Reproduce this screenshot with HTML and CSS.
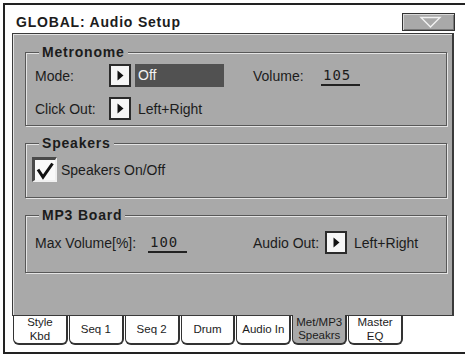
FILE: index.html
```html
<!DOCTYPE html>
<html lang="en">
<head>
  <meta charset="UTF-8" />
  <title>GLOBAL: Audio Setup</title>
  <link rel="stylesheet" href="styles.css">
</head>
<body>
  <div class="screen">
    <div class="titlebar">
      <h1 class="title">GLOBAL: Audio Setup</h1>
      <button class="menu-btn">
        <svg width="51" height="16" viewBox="0 0 51 16">
          <polygon points="18,3.5 37,3.5 27.5,13" fill="none" stroke="#f2f2f2" stroke-width="1.4"/>
        </svg>
      </button>
    </div>

    <div class="panel">
      <div class="group">
        <div class="group-title">Metronome</div>
        <div class="row first">
          <div class="cell">
            <span class="label">Mode:</span>
            <span class="arrow-box"><svg width="7" height="11" viewBox="0 0 7 11"><path d="M0.5 0.5 L6.5 5.5 L0.5 10.5 Z" fill="#111"/></svg></span>
            <span class="select-field">Off</span>
          </div>
          <div class="cell">
            <span class="label label-vol">Volume:</span>
            <span class="num">105</span>
          </div>
        </div>
        <div class="row second">
          <div class="cell">
            <span class="label">Click Out:</span>
            <span class="arrow-box"><svg width="7" height="11" viewBox="0 0 7 11"><path d="M0.5 0.5 L6.5 5.5 L0.5 10.5 Z" fill="#111"/></svg></span>
            <span class="value">Left+Right</span>
          </div>
        </div>
      </div>

      <div class="group">
        <div class="group-title">Speakers</div>
        <div class="check-row">
          <span class="checkbox">
            <svg width="20" height="20" viewBox="0 0 20 20"><path d="M3 9.5 L8 17 L17.5 3.5" fill="none" stroke="#111" stroke-width="3"/></svg>
          </span>
          <span class="value">Speakers On/Off</span>
        </div>
      </div>

      <div class="group group-mp3">
        <div class="group-title">MP3 Board</div>
        <div class="row first mp3-row">
          <div class="cell">
            <span class="label label-max">Max Volume[%]:</span>
            <span class="num">100</span>
          </div>
          <div class="cell">
            <span class="label label-out">Audio Out:</span>
            <span class="arrow-box"><svg width="7" height="11" viewBox="0 0 7 11"><path d="M0.5 0.5 L6.5 5.5 L0.5 10.5 Z" fill="#111"/></svg></span>
            <span class="value">Left+Right</span>
          </div>
        </div>
      </div>
    </div>

    <div class="tabs">
      <div class="tab">Style<br>Kbd</div>
      <div class="tab">Seq 1</div>
      <div class="tab">Seq 2</div>
      <div class="tab">Drum</div>
      <div class="tab">Audio In</div>
      <div class="tab active">Met/MP3<br>Speakrs</div>
      <div class="tab">Master<br>EQ</div>
    </div>
  </div>
</body>
</html>
```

FILE: styles.css
```css
* {
  margin: 0;
  padding: 0;
  box-sizing: border-box;
}

:root {
  --panel: #a9a9a9;
  --line: #3a3a3a;
  --light: #e4e4e4;
  --ink: #1c1c1c;
}

body {
  background: #fff;
  font-family: "Liberation Sans", Arial, sans-serif;
  font-size: 14px;
  color: var(--ink);
  padding: 3px 0 0 3px;
}

.screen {
  width: 462px;
  height: 351px;
  border: 2px solid #222;
  border-right: none;
  display: flex;
  flex-direction: column;
}

.titlebar {
  height: 28px;
  display: flex;
  justify-content: space-between;
  align-items: flex-start;
}

.title {
  font-size: 14px;
  font-weight: bold;
  letter-spacing: 0.8px;
  line-height: 16px;
  padding: 9px 0 0 11px;
}

.menu-btn {
  width: 53px;
  height: 18px;
  margin: 8px 10px 0 0;
  background: var(--panel);
  border: 1px solid #333;
  box-shadow: inset 1px 1px 0 #d8d8d8, inset -1px -1px 0 #777;
  display: flex;
}

.panel {
  width: 442px;
  height: 283px;
  margin-left: 7px;
  background: var(--panel);
  border: 1px solid var(--line);
  border-right-width: 2px;
  box-shadow: inset 1px 1px 0 var(--light);
  padding: 18px 5px 0 12px;
}

.group {
  border: 1px solid #585858;
  box-shadow: inset 1px 1px 0 var(--light), 1px 1px 0 var(--light);
  padding: 0 8px 5px 9px;
}

.group + .group {
  margin-top: 17px;
}

.group-title {
  width: fit-content;
  margin: -9px 0 0 4px;
  padding: 0 3px;
  background: var(--panel);
  font-weight: bold;
  letter-spacing: 0.8px;
  line-height: 16px;
}

.row {
  display: grid;
  grid-template-columns: 218px auto;
  height: 23px;
}

.row.first {
  margin-top: 4px;
}

.row.second {
  margin-top: 10px;
}

.mp3-row.first {
  margin-top: 8px;
}

.group-mp3 {
  padding-bottom: 18px;
}

.cell {
  display: flex;
  align-items: center;
}

.label {
  width: 74px;
}

.label-vol {
  width: 68px;
}

.label-max {
  width: 113px;
}

.label-out {
  width: 72px;
}

.arrow-box {
  width: 22px;
  height: 23px;
  border: 2px solid #2b2b2b;
  background: #f6f6f6;
  display: flex;
  align-items: center;
  justify-content: center;
}

.select-field {
  width: 89px;
  height: 23px;
  margin-left: 4px;
  background: #515151;
  color: #f2f2f2;
  padding-left: 3px;
  line-height: 23px;
}

.value {
  margin-left: 7px;
}

.num {
  width: 39px;
  align-self: flex-end;
  margin-bottom: 1px;
  padding-left: 2px;
  font-family: "DejaVu Sans Mono", "Liberation Mono", monospace;
  font-size: 14px;
  letter-spacing: 1px;
  line-height: 17px;
  border-bottom: 2px solid #222;
}

.check-row {
  display: flex;
  align-items: center;
  margin: 6px 0 0 -3px;
  padding-bottom: 10px;
}

.checkbox {
  width: 25px;
  height: 25px;
  background: #fafafa;
  border-style: solid;
  border-width: 3px 2px 2px 3px;
  border-color: #4a4a4a #f0f0f0 #f0f0f0 #4a4a4a;
  display: flex;
}

.check-row .value {
  margin-left: 4px;
}

.tabs {
  display: flex;
  gap: 1px;
  width: 390px;
  margin-left: 8px;
}

.tab {
  flex: 1;
  height: 29px;
  background: #fff;
  border: 1px solid #333;
  border-top: none;
  border-right-width: 2px;
  border-bottom-width: 2px;
  border-radius: 0 0 6px 6px;
  display: flex;
  align-items: center;
  justify-content: center;
  text-align: center;
  font-size: 11.5px;
  line-height: 13.5px;
}

.tab.active {
  background: var(--panel);
  height: 30px;
  margin-top: -1px;
}
```
